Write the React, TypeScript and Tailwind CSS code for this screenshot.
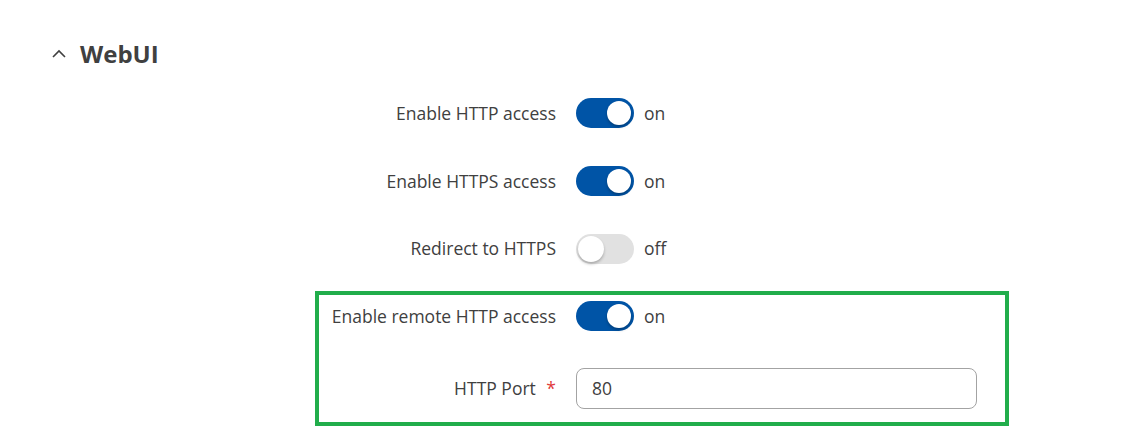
import React from "react";

function Toggle({ on }: { on: boolean }) {
  return (
    <div className="flex items-center gap-[10px]">
      <div
        className={`relative h-[30px] w-[58px] rounded-full ${on ? "bg-[#0054a6]" : "bg-[#e1e1e1]"}`}
      >
        <div
          className={`absolute rounded-full bg-white shadow-[0_2px_3px_rgba(0,0,0,0.25)] ${
            on ? "left-[31px] top-[3px] h-[24px] w-[24px]" : "left-[2px] top-[2px] h-[26px] w-[26px]"
          }`}
        />
      </div>
      <span className="text-[17.5px] text-[#404040]">{on ? "on" : "off"}</span>
    </div>
  );
}

function Row({ label, children, className, labelW = "w-[256px]" }: { label: React.ReactNode; children: React.ReactNode; className?: string; labelW?: string }) {
  return (
    <div className={`flex items-center ${className ?? ""}`}>
      <div className={`${labelW} pr-[20px] text-right text-[17.5px] text-[#404040] whitespace-nowrap`}>{label}</div>
      {children}
    </div>
  );
}

export default function App() {
  return (
    <div
      className="h-[435px] w-[1122px] bg-white"
      style={{ fontFamily: '"Open Sans", "Liberation Sans", sans-serif' }}
    >
      <div className="flex h-[79px] items-end pb-[7px] pl-[52px]">
        <div className="flex items-center gap-[14px]">
          <svg width="14" height="9" viewBox="0 0 14 9" fill="none" className="mt-[-2px]">
            <path d="M1 8L7 2L13 8" stroke="#404040" strokeWidth="1.6" />
          </svg>
          <span className="text-[24px] font-bold text-[#404040]">WebUI</span>
        </div>
      </div>

      <div className="pl-[320px]">
        <Row label="Enable HTTP access" className="h-[68px]">
          <Toggle on />
        </Row>
        <Row label="Enable HTTPS access" className="h-[68px]">
          <Toggle on />
        </Row>
        <Row label="Redirect to HTTPS" className="h-[67px]">
          <Toggle on={false} />
        </Row>
      </div>

      <div className="ml-[315px] mt-[9px] h-[135px] w-[694px] border-[4px] border-[#21ad4b]">
        <Row label="Enable remote HTTP access" labelW="w-[257px]" className="h-[42px]">
          <Toggle on />
        </Row>
        <Row
          label={
            <span>
              HTTP Port <span className="ml-[6px] text-[#e03a3a]">*</span>
            </span>
          }
          labelW="w-[257px]"
          className="mt-[31px]"
        >
          <div className="flex h-[41px] w-[401px] items-center rounded-[8px] border border-[#a3a3a3] px-[15px] text-[17.5px] text-[#404040]">
            80
          </div>
        </Row>
      </div>
    </div>
  );
}
